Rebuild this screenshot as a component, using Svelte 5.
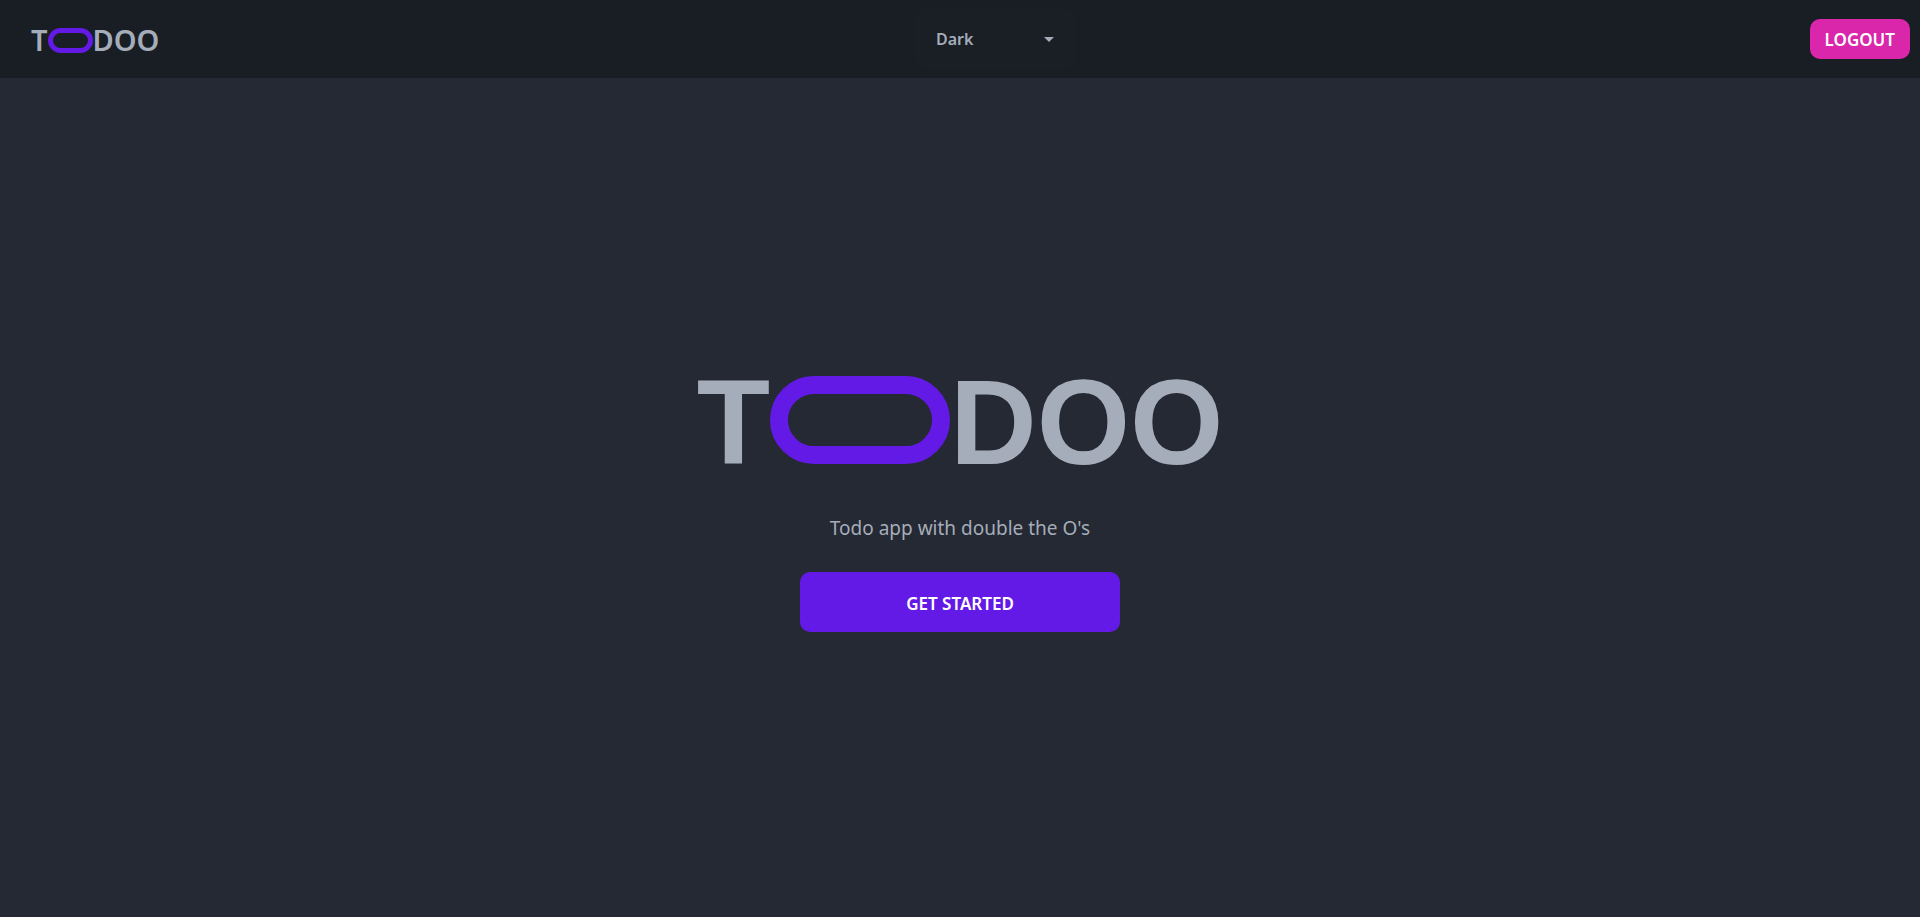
<script>
  let theme = $state('Dark');
</script>

<div class="page">
  <header>
    <a class="brand" href="#home" aria-label="Toodoo">
      <span>T</span>
      <svg width="45" height="25" viewBox="0 0 45 25" aria-hidden="true"><rect x="2.5" y="2.5" width="40" height="20" rx="10" /></svg>
      <span>DOO</span>
    </a>
    <select bind:value={theme} aria-label="Theme">
      <option>Dark</option>
      <option>Light</option>
    </select>
    <button class="logout">LOGOUT</button>
  </header>
  <main>
    <h1 aria-label="Toodoo">
      <span>T</span>
      <svg width="180" height="88" viewBox="0 0 180 88" aria-hidden="true"><rect x="9" y="9" width="162" height="70" rx="35" /></svg>
      <span>DOO</span>
    </h1>
    <p>Todo app with double the O's</p>
    <button class="start">GET STARTED</button>
  </main>
</div>

<style>
  :global(body) { margin: 0; background: #242933; }
  .page {
    min-height: 100vh;
    display: flex;
    flex-direction: column;
    background: #242933;
    color: #a6adba;
    font-family: "Segoe UI", "Noto Sans", sans-serif;
  }
  header {
    display: flex;
    justify-content: space-between;
    align-items: center;
    padding: 9px 10px;
    background: #191e24;
  }
  .brand {
    display: flex;
    align-items: center;
    padding: 2px 21px 0;
    color: inherit;
    text-decoration: none;
    font-size: 29px;
    font-weight: 600;
    line-height: 40px;
  }
  svg { display: block; fill: none; stroke: #641ae6; }
  .brand svg { stroke-width: 5px; }
  select {
    appearance: none;
    width: 160px;
    height: 60px;
    padding: 0 21px;
    border: 0;
    border-radius: 10px;
    background: #1a1e25 url("data:image/svg+xml,%3Csvg xmlns='http://www.w3.org/2000/svg' viewBox='0 0 10 5'%3E%3Cpath d='M0 0h10L5 5z' fill='%23a6adba'/%3E%3C/svg%3E") 129px 28px / 10px 5px no-repeat;
    color: inherit;
    font: 600 16px "Segoe UI", "Noto Sans", sans-serif;
  }
  button {
    border: 0;
    color: #fff;
    font: 600 17px "Segoe UI", "Noto Sans", sans-serif;
    border-radius: 10px;
    cursor: pointer;
  }
  .logout { height: 40px; padding: 0 15px; background: #d926aa; }
  main {
    flex: 1;
    display: flex;
    flex-direction: column;
    align-items: center;
    justify-content: center;
  }
  h1 {
    display: flex;
    align-items: baseline;
    margin: 0;
    font-family: "Liberation Sans", Arial, sans-serif;
    font-size: 120px;
    font-weight: 700;
    line-height: 118px;
  }
  h1 svg { stroke-width: 18px; }
  p { margin: 32px 0 28px; font-size: 19px; line-height: 31px; }
  .start { width: 320px; max-width: 100%; height: 60px; padding: 2px 16px 0; background: #641ae6; }
</style>
